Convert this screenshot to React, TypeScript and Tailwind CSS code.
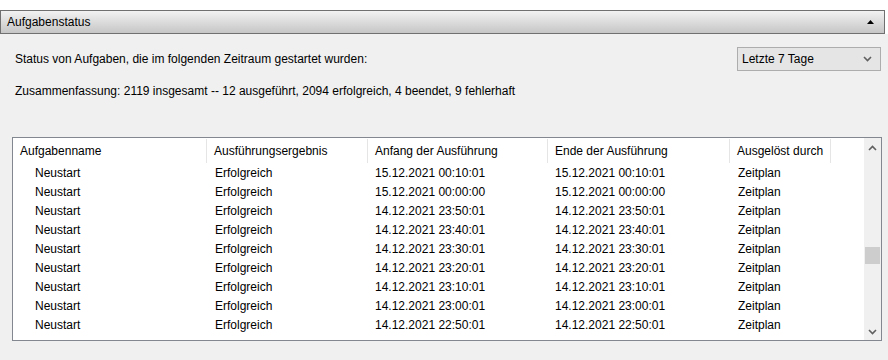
const rows = [
  ['15.12.2021 00:10:01', '15.12.2021 00:10:01'],
  ['15.12.2021 00:00:00', '15.12.2021 00:00:00'],
  ['14.12.2021 23:50:01', '14.12.2021 23:50:01'],
  ['14.12.2021 23:40:01', '14.12.2021 23:40:01'],
  ['14.12.2021 23:30:01', '14.12.2021 23:30:01'],
  ['14.12.2021 23:20:01', '14.12.2021 23:20:01'],
  ['14.12.2021 23:10:01', '14.12.2021 23:10:01'],
  ['14.12.2021 23:00:01', '14.12.2021 23:00:01'],
  ['14.12.2021 22:50:01', '14.12.2021 22:50:01'],
];

const cols = [
  { title: 'Aufgabenname', w: 'w-[194px]' },
  { title: 'Ausführungsergebnis', w: 'w-[161px]' },
  { title: 'Anfang der Ausführung', w: 'w-[180px]' },
  { title: 'Ende der Ausführung', w: 'w-[182px]' },
  { title: 'Ausgelöst durch', w: 'w-[101px]' },
];

function Chevron({ up }: { up?: boolean }) {
  return (
    <svg width="9" height="6" viewBox="0 0 9 6" className="text-[#606060]">
      <path d={up ? 'M1 5 L4.5 1.5 L8 5' : 'M1 1 L4.5 4.5 L8 1'} fill="none" stroke="currentColor" strokeWidth="1.6" />
    </svg>
  );
}

export default function App() {
  return (
    <div className="w-[888px] h-[360px] bg-[#f0f0f0] overflow-hidden text-[12px] text-black font-['Segoe_UI','Liberation_Sans',sans-serif] leading-none">
      <div className="h-[10px] bg-white" />
      <div className="flex bg-white">
        <div className="w-[885px] h-[24px] border border-[#707070] bg-gradient-to-b from-[#f2f2f2] to-[#c6c6c6] flex items-center justify-between pl-[6px] pr-[10px]">
          <span>Aufgabenstatus</span>
          <svg width="7" height="4" viewBox="0 0 7 4">
            <path d="M0 4 L3.5 0 L7 4 Z" fill="#000" />
          </svg>
        </div>
      </div>

      <div className="flex items-center justify-between pl-[15px] pr-[7px] mt-[13px]">
        <span>Status von Aufgaben, die im folgenden Zeitraum gestartet wurden:</span>
        <div className="w-[144px] h-[24px] border border-[#adadad] bg-[#e5e5e5] flex items-center justify-between pl-[4px] pr-[8px]">
          <span>Letzte 7 Tage</span>
          <Chevron />
        </div>
      </div>

      <div className="pl-[15px] mt-[14px]">Zusammenfassung: 2119 insgesamt -- 12 ausgeführt, 2094 erfolgreich, 4 beendet, 9 fehlerhaft</div>

      <div className="ml-[12px] mt-[40px] w-[870px] h-[204px] border border-[#828790] bg-white flex">
        <div className="flex-1 flex flex-col pt-[1px]">
          <div className="flex h-[24px]">
            {cols.map((c) => (
              <div key={c.title} className={`${c.w} h-full flex items-center pl-[7px] border-r border-[#e5e5e5]`}>
                {c.title}
              </div>
            ))}
          </div>
          {rows.map((r, i) => (
            <div key={i} className="flex h-[19px] items-center">
              <div className="w-[194px] pl-[22px]">Neustart</div>
              <div className="w-[161px] pl-[8px]">Erfolgreich</div>
              <div className="w-[180px] pl-[7px]">{r[0]}</div>
              <div className="w-[182px] pl-[7px]">{r[1]}</div>
              <div className="w-[101px] pl-[8px]">Zeitplan</div>
            </div>
          ))}
        </div>
        <div className="w-[17px] bg-[#f0f0f0] flex flex-col items-center">
          <div className="h-[17px] flex items-center justify-center mt-[1px]">
            <Chevron up />
          </div>
          <div className="mt-[91px] w-[15px] h-[17px] bg-[#cdcdcd]" />
          <div className="flex-1" />
          <div className="h-[17px] flex items-center justify-center">
            <Chevron />
          </div>
        </div>
      </div>
    </div>
  );
}
